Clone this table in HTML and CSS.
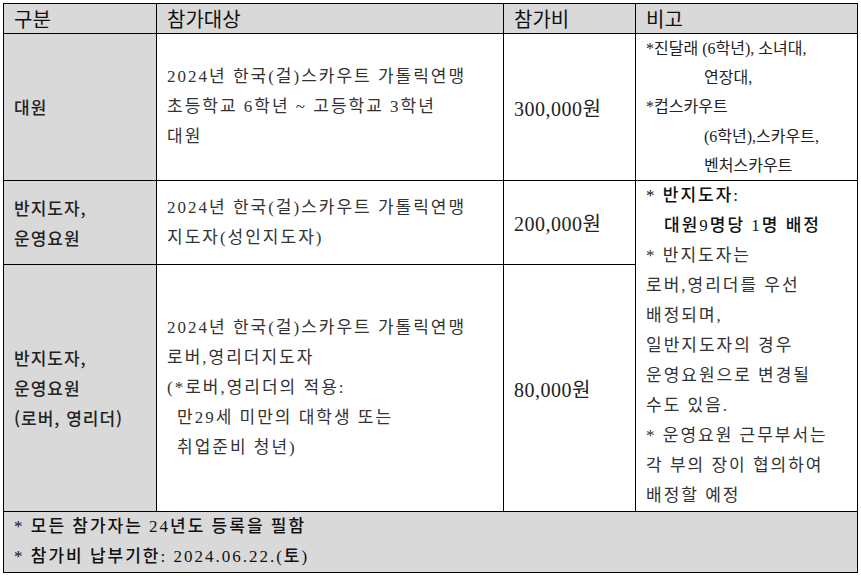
FILE: index.html
```html
<!DOCTYPE html>
<html lang="ko">
<head>
<meta charset="utf-8">
<link rel="stylesheet" href="styles.css">
</head>
<body>
<table class="fee">
  <colgroup>
    <col class="c1"><col class="c2"><col class="c3"><col class="c4">
  </colgroup>
  <tr class="head">
    <th>구분</th>
    <th>참가대상</th>
    <th>참가비</th>
    <th>비고</th>
  </tr>
  <tr class="r1">
    <td class="kind">대원</td>
    <td class="target">2024년 한국(걸)스카우트 가톨릭연맹<br>초등학교 6학년 ~ 고등학교 3학년<br>대원</td>
    <td class="fee-amt">300,000원</td>
    <td class="note small">*진달래 (6학년), 소녀대,<br><span class="ind">연장대,</span><br>*컵스카우트<br><span class="ind">(6학년),스카우트,</span><br><span class="ind">벤처스카우트</span></td>
  </tr>
  <tr class="r2">
    <td class="kind">반지도자,<br>운영요원</td>
    <td class="target">2024년 한국(걸)스카우트 가톨릭연맹<br>지도자(성인지도자)</td>
    <td class="fee-amt">200,000원</td>
    <td class="note wide" rowspan="2"><b>* 반지도자:</b><br><b class="ind2">대원9명당 1명 배정</b><br>* 반지도자는<br>로버,영리더를 우선<br>배정되며,<br>일반지도자의 경우<br>운영요원으로 변경될<br>수도 있음.<br>* 운영요원 근무부서는<br>각 부의 장이 협의하여<br>배정할 예정</td>
  </tr>
  <tr class="r3">
    <td class="kind">반지도자,<br>운영요원<br>(로버, 영리더)</td>
    <td class="target">2024년 한국(걸)스카우트 가톨릭연맹<br>로버,영리더지도자<br>(*로버,영리더의 적용:<br><span class="ind3">만29세 미만의 대학생 또는</span><br><span class="ind3">취업준비 청년)</span></td>
    <td class="fee-amt">80,000원</td>
  </tr>
  <tr class="foot">
    <td colspan="4">* 모든 참가자는 24년도 등록을 필함<br>* 참가비 납부기한: 2024.06.22.(토)</td>
  </tr>
</table>
</body>
</html>
```

FILE: styles.css
```css
html, body {
  margin: 0;
  padding: 0;
  background: #ffffff;
}
body {
  padding: 3px 0 0 3px;
  font-family: "Liberation Serif", "Noto Sans CJK KR", serif;
  color: #111;
}
.fee {
  border-collapse: collapse;
  table-layout: fixed;
  width: 854px;
}
.c1 { width: 153px; }
.c2 { width: 347px; }
.c3 { width: 132px; }
.c4 { width: 222px; }

.fee th, .fee td {
  border: 1px solid #000;
  padding: 0 0 0 10px;
  text-align: left;
  vertical-align: middle;
}
.head th {
  background: #d9d9d9;
  font-family: "Noto Sans CJK KR", sans-serif;
  font-weight: 400;
  font-size: 20px;
  line-height: 26px;
  height: 29px;
  color: #111;
}
.r1 td { height: 146px; }
.r2 td { height: 83px; }
.r3 td { height: 245px; }

.kind {
  background: #d9d9d9;
  font-family: "Noto Sans CJK KR", sans-serif;
  font-weight: 500;
  font-size: 17px;
  line-height: 30px;
  letter-spacing: 1px;
  color: #222;
}
.target {
  font-family: "Liberation Serif", "Noto Sans CJK KR", serif;
  font-weight: 400;
  font-size: 17px;
  line-height: 30px;
  letter-spacing: 2px;
  color: #333;
}
.fee-amt {
  font-family: "Liberation Serif", "Noto Sans CJK KR", serif;
  font-size: 20px;
  letter-spacing: 0.5px;
  color: #222;
}
.note {
  vertical-align: top;
  color: #222;
}
.note.small {
  font-family: "Liberation Serif", "Noto Sans CJK KR", serif;
  font-size: 16px;
  line-height: 29.2px;
  font-weight: 400;
  padding-top: 0;
}
.note.wide {
  font-family: "Liberation Serif", "Noto Sans CJK KR", serif;
  font-size: 17px;
  line-height: 30px;
  font-weight: 400;
  letter-spacing: 2px;
  color: #333;
}
.note.wide b {
  font-weight: 500;
  color: #111;
}
.ind { padding-left: 58px; }
.ind2 { padding-left: 18px; }
.ind3 { padding-left: 10px; }

.foot td {
  background: #d9d9d9;
  font-family: "Liberation Serif", "Noto Sans CJK KR", serif;
  font-weight: 500;
  font-size: 17px;
  line-height: 30px;
  letter-spacing: 2px;
  height: 59px;
  color: #111;
}
```
